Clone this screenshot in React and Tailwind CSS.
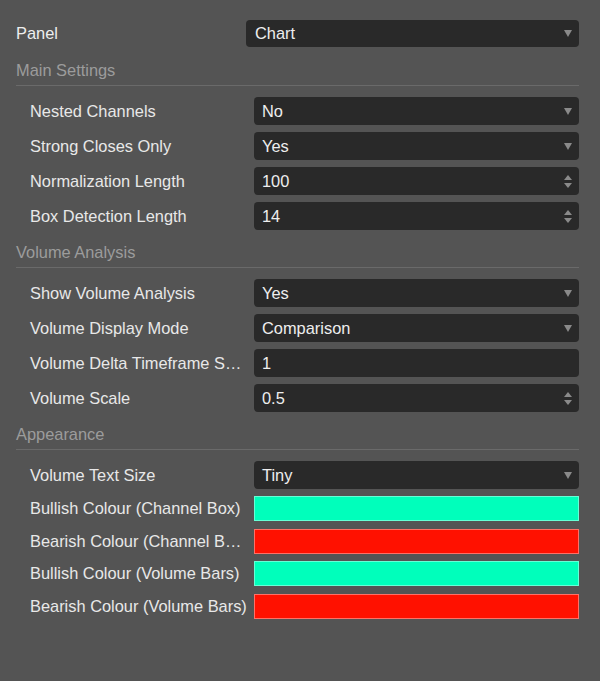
import React from 'react';

const font = { fontFamily: '"Liberation Sans", Arial, sans-serif' };

function Caret() {
  return (
    <svg width="8" height="7" viewBox="0 0 8 7" className="shrink-0">
      <path d="M0 0 H8 L4 7 Z" fill="#8a8a8a" />
    </svg>
  );
}

function Spinner() {
  return (
    <div className="flex flex-col gap-[3px] shrink-0">
      <svg width="8" height="5" viewBox="0 0 8 5">
        <path d="M4 0 L8 5 H0 Z" fill="#8a8a8a" />
      </svg>
      <svg width="8" height="5" viewBox="0 0 8 5">
        <path d="M0 0 H8 L4 5 Z" fill="#8a8a8a" />
      </svg>
    </div>
  );
}

function Field({ value, kind }) {
  return (
    <div className="flex-1 h-[28px] rounded-[4px] bg-[#292929] flex items-center pl-[8px] pr-[7px] text-[#eeeeee]">
      <span className="flex-1 whitespace-nowrap">{value}</span>
      {kind === 'select' && <Caret />}
      {kind === 'number' && <Spinner />}
    </div>
  );
}

function Row({ label, value, kind, color }) {
  return (
    <div className="flex items-center pl-[14px]">
      <div className="w-[219px] shrink-0 whitespace-nowrap text-[#e8e8e8]">{label}</div>
      <div className="w-[5px] shrink-0" />
      {color ? (
        <div className="flex-1 h-[25px] border border-white/40" style={{ background: color }} />
      ) : (
        <Field value={value} kind={kind} />
      )}
    </div>
  );
}

function Section({ title, first, children }) {
  return (
    <div className={first ? 'mt-[13px]' : 'mt-[12px]'}>
      <div className="leading-[20px] text-[#9c9c9c] pb-[5px] border-b border-[#6a6a6a]">{title}</div>
      <div className="mt-[11px] flex flex-col">{children}</div>
    </div>
  );
}

export default function App() {
  return (
    <div className="min-h-screen bg-[#545454] text-[16.4px] pt-[20px] pl-[16px] pr-[21px]" style={font}>
      <div className="flex items-center">
        <div className="w-[230px] shrink-0 text-[#eeeeee]">Panel</div>
        <div className="flex-1 h-[27px] rounded-[4px] bg-[#292929] flex items-center pl-[9px] pr-[7px] text-[#eeeeee]">
          <span className="flex-1">Chart</span>
          <Caret />
        </div>
      </div>

      <Section title="Main Settings" first>
        <div className="flex flex-col gap-[7px]">
          <Row label="Nested Channels" value="No" kind="select" />
          <Row label="Strong Closes Only" value="Yes" kind="select" />
          <Row label="Normalization Length" value="100" kind="number" />
          <Row label="Box Detection Length" value="14" kind="number" />
        </div>
      </Section>

      <Section title="Volume Analysis">
        <div className="flex flex-col gap-[7px]">
          <Row label="Show Volume Analysis" value="Yes" kind="select" />
          <Row label="Volume Display Mode" value="Comparison" kind="select" />
          <Row label="Volume Delta Timeframe S…" value="1" kind="text" />
          <Row label="Volume Scale" value="0.5" kind="number" />
        </div>
      </Section>

      <Section title="Appearance">
        <Row label="Volume Text Size" value="Tiny" kind="select" />
        <div className="mt-[7px] flex flex-col gap-[7.5px]">
          <Row label="Bullish Colour (Channel Box)" color="#00ffbb" />
          <Row label="Bearish Colour (Channel B…" color="#ff1100" />
          <Row label="Bullish Colour (Volume Bars)" color="#00ffbb" />
          <Row label="Bearish Colour (Volume Bars)" color="#ff1100" />
        </div>
      </Section>
    </div>
  );
}
